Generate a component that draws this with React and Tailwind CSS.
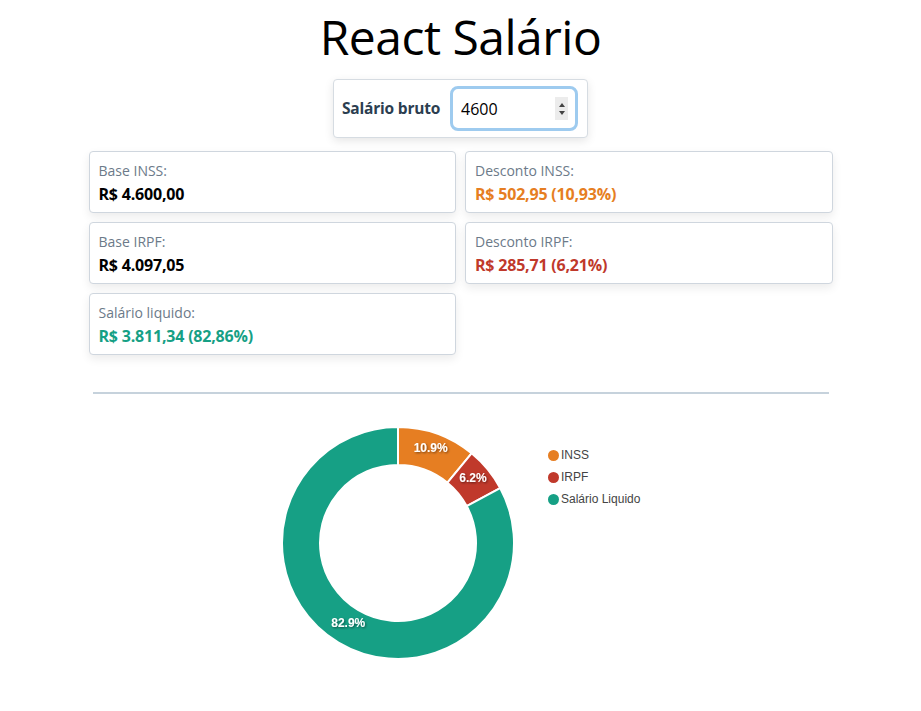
import React, { useState } from 'react';

// dados do cálculo
const bruto = 4600;
const inss = 502.95;
const irpf = 285.71;
const liquido = 3811.34;

const fatias = [
  { nome: 'INSS', valor: inss, cor: '#e67e22' },
  { nome: 'IRPF', valor: irpf, cor: '#c0392b' },
  { nome: 'Salário Liquido', valor: liquido, cor: '#16a085' },
];

const Card = ({ label, value, color }) => (
  <div className="h-[62px] rounded-[4px] border border-[#cfd6de] bg-white px-[9px] pt-[9px] shadow-[0_4px_10px_rgba(0,0,0,0.08)]">
    <div className="text-[14px] leading-[20px] text-[#6c7a89]">{label}</div>
    <div className={`mt-[3px] text-[16px] font-bold leading-[20px] tracking-[-0.2px] ${color}`}>{value}</div>
  </div>
);

const Donut = () => {
  const total = fatias.reduce((t, f) => t + f.valor, 0);
  const cx = 120;
  const cy = 120;
  const R = 116;
  const r = 78;
  let angulo = -Math.PI / 2;

  const ponto = (raio, a) => [cx + raio * Math.cos(a), cy + raio * Math.sin(a)];

  return (
    <svg width="240" height="240" viewBox="0 0 240 240">
      <defs>
        <filter id="sombra" x="-20%" y="-20%" width="140%" height="140%">
          <feDropShadow dx="1" dy="1" stdDeviation="1" floodColor="#000" floodOpacity="0.5" />
        </filter>
      </defs>
      {fatias.map((f) => {
        const passo = (f.valor / total) * Math.PI * 2;
        const a0 = angulo;
        const a1 = angulo + passo;
        angulo = a1;
        const grande = passo > Math.PI ? 1 : 0;
        const [x0, y0] = ponto(R, a0);
        const [x1, y1] = ponto(R, a1);
        const [x2, y2] = ponto(r, a1);
        const [x3, y3] = ponto(r, a0);
        const d = `M${x0} ${y0} A${R} ${R} 0 ${grande} 1 ${x1} ${y1} L${x2} ${y2} A${r} ${r} 0 ${grande} 0 ${x3} ${y3} Z`;
        const meio = (a0 + a1) / 2;
        const [lx, ly] = ponto((R + r) / 2, meio);
        return (
          <g key={f.nome}>
            <path d={d} fill={f.cor} stroke="#fff" strokeWidth="2" />
            <text
              x={lx}
              y={ly - 2.5}
              textAnchor="middle"
              dominantBaseline="middle"
              fill="#fff"
              fontSize="12"
              fontWeight="bold"
              fontFamily="'Liberation Sans', Arial, sans-serif"
              filter="url(#sombra)"
            >
              {((f.valor / total) * 100).toFixed(1)}%
            </text>
          </g>
        );
      })}
    </svg>
  );
};

export default function App() {
  const [valor, setValor] = useState(String(bruto));

  return (
    <div className="min-h-[711px] bg-white font-['Open_Sans','Noto_Sans',sans-serif] text-black">
      <h1 className="pt-[9px] text-center text-[48px] leading-[55px] tracking-[-0.5px]">React Salário</h1>

      <div className="mt-[15px] flex justify-center">
        <div className="flex h-[59px] w-[255px] items-center rounded-[4px] border border-[#d6dce2] bg-white pl-[8px] pr-[9px] shadow-[0_3px_10px_rgba(0,0,0,0.1)]">
          <label className="text-[15.5px] font-bold tracking-[-0.2px] text-[#2c3e50]">Salário bruto</label>
          <div className="ml-auto flex h-[45px] w-[128px] items-center rounded-[8px] border-[3px] border-[#9ecbef] bg-white pl-[8px] pr-[7px]">
            <input
              type="text"
              value={valor}
              onChange={(e) => setValor(e.target.value)}
              className="w-full bg-transparent text-[16px] text-black outline-none"
            />
            <div className="flex h-[23px] w-[13px] shrink-0 flex-col items-center justify-center gap-[4px] bg-[#ececec]">
              <div className="h-0 w-0 border-x-[3.5px] border-b-[4px] border-x-transparent border-b-[#444]" />
              <div className="h-0 w-0 border-x-[3.5px] border-t-[4px] border-x-transparent border-t-[#444]" />
            </div>
          </div>
        </div>
      </div>

      <div className="mx-auto mt-[13px] grid w-[744px] grid-cols-2 gap-[9px]">
        <Card label="Base INSS:" value="R$ 4.600,00" color="text-black" />
        <Card label="Desconto INSS:" value="R$ 502,95 (10,93%)" color="text-[#e67e22]" />
        <Card label="Base IRPF:" value="R$ 4.097,05" color="text-black" />
        <Card label="Desconto IRPF:" value="R$ 285,71 (6,21%)" color="text-[#c0392b]" />
        <Card label="Salário liquido:" value="R$ 3.811,34 (82,86%)" color="text-[#16a085]" />
      </div>

      <hr className="mx-auto mt-[37px] w-[736px] border-t-2 border-[#c6d2dc]" />

      <div className="mt-[29px] flex justify-center">
        <Donut />
        <ul className="ml-[30px] mt-[21px] w-[95px] font-['Liberation_Sans',Arial,sans-serif] text-[12px] text-[#444]">
          {fatias.map((f) => (
            <li key={f.nome} className="flex h-[22px] items-center gap-[2px]">
              <span className="h-[11px] w-[11px] rounded-full" style={{ backgroundColor: f.cor }} />
              <span>{f.nome}</span>
            </li>
          ))}
        </ul>
      </div>
    </div>
  );
}
